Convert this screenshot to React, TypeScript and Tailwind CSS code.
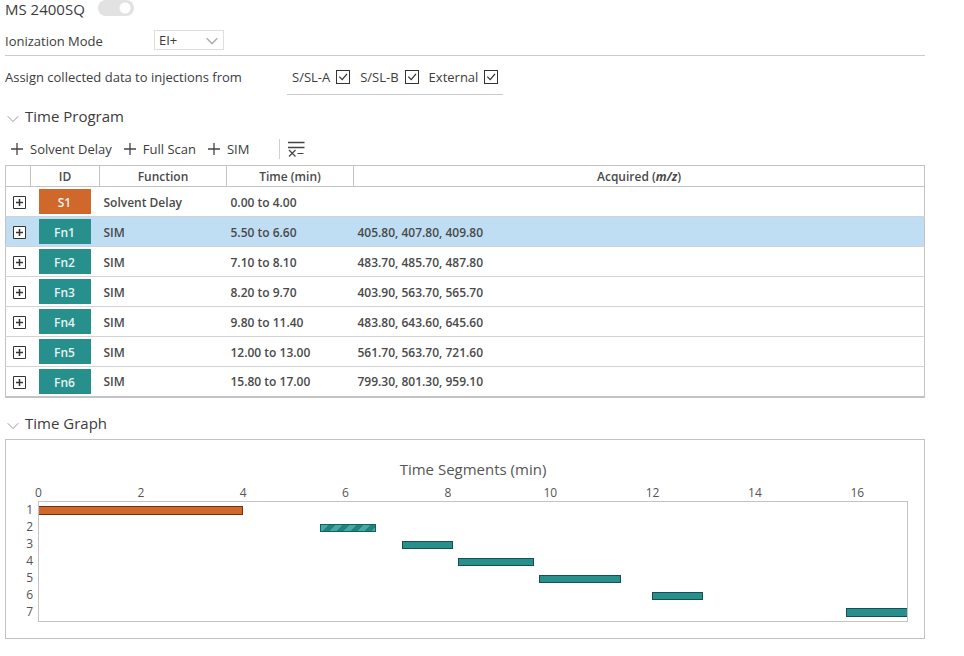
import { useState } from "react";
import type { ReactNode } from "react";

type Row = { id: string; fn: string; start: number; end: number; mz: string };

const rows: Row[] = [
  { id: "S1", fn: "Solvent Delay", start: 0, end: 4, mz: "" },
  { id: "Fn1", fn: "SIM", start: 5.5, end: 6.6, mz: "405.80, 407.80, 409.80" },
  { id: "Fn2", fn: "SIM", start: 7.1, end: 8.1, mz: "483.70, 485.70, 487.80" },
  { id: "Fn3", fn: "SIM", start: 8.2, end: 9.7, mz: "403.90, 563.70, 565.70" },
  { id: "Fn4", fn: "SIM", start: 9.8, end: 11.4, mz: "483.80, 643.60, 645.60" },
  { id: "Fn5", fn: "SIM", start: 12, end: 13, mz: "561.70, 563.70, 721.60" },
  { id: "Fn6", fn: "SIM", start: 15.8, end: 17, mz: "799.30, 801.30, 959.10" },
];

const TOTAL = 17;
const ticks = [0, 2, 4, 6, 8, 10, 12, 14, 16];
const pct = (minutes: number) => `${(minutes / TOTAL) * 100}%`;

function Chevron({ className }: { className: string }) {
  return (
    <svg viewBox="0 0 12 8" fill="none" stroke="currentColor" className={className} aria-hidden="true">
      <path d="M0.7 1.2 6 6.6l5.300-5.400" />
    </svg>
  );
}

function CheckField({ label }: { label: string }) {
  return (
    <label className="flex items-center gap-[6px]">
      {label}
      <span className="grid">
        <input
          type="checkbox"
          defaultChecked
          className="peer col-start-1 row-start-1 size-[14px] appearance-none border border-[#333] bg-white"
        />
        <svg
          viewBox="0 0 14 14"
          fill="none"
          stroke="#333"
          strokeWidth="1.3"
          className="pointer-events-none invisible col-start-1 row-start-1 size-[14px] peer-checked:visible"
          aria-hidden="true"
        >
          <path d="M3.300 6.600 6.200 9.600 11 3.800" />
        </svg>
      </span>
    </label>
  );
}

function AddButton({ children }: { children: ReactNode }) {
  return (
    <button type="button" className="flex items-center gap-[7px]">
      <svg viewBox="0 0 12 12" stroke="#444" strokeWidth="1.3" className="size-3" aria-hidden="true">
        <path d="M6 0v12M0 6h12" />
      </svg>
      {children}
    </button>
  );
}

function Section({ title, children }: { title: string; children: ReactNode }) {
  const [open, setOpen] = useState(true);
  return (
    <section>
      <h2>
        <button
          type="button"
          aria-expanded={open}
          onClick={() => setOpen(!open)}
          className="flex items-center gap-[6px] pl-[2px] text-[15px] leading-6"
        >
          <Chevron className="mt-[6px] h-2 w-3 text-[#999]" />
          {title}
        </button>
      </h2>
      {open && children}
    </section>
  );
}

function ProgramTable() {
  const [selected, setSelected] = useState("Fn1");
  return (
    <table className="w-full table-fixed border-collapse border border-b-2 border-[#c3c3c6] text-[12px] font-semibold text-[#4a4a4a]">
      <colgroup>
        <col className="w-[25px]" />
        <col className="w-[69px]" />
        <col className="w-[127px]" />
        <col className="w-[127px]" />
        <col />
      </colgroup>
      <thead>
        <tr className="h-[21px] border-b border-[#c3c3c6] leading-4 *:pt-[2px]">
          <th className="border-r border-[#c3c3c6]" />
          <th className="border-r border-[#c3c3c6] font-semibold">ID</th>
          <th className="border-r border-[#c3c3c6] font-semibold">Function</th>
          <th className="border-r border-[#c3c3c6] font-semibold">Time (min)</th>
          <th className="font-semibold">
            Acquired (<i className="font-bold">m/z</i>)
          </th>
        </tr>
      </thead>
      <tbody>
        {rows.map((r) => (
          <tr
            key={r.id}
            onClick={() => setSelected(r.id)}
            className={`h-[30px] border-b border-[#d3d3d6] last:border-b-2 last:border-[#c3c3c6] ${
              r.id === selected ? "bg-[#bfdef3]" : ""
            }`}
          >
            <td className="pt-[2px]">
              <button type="button" aria-label={`Expand ${r.id}`} className="ml-[7px] block">
                <svg viewBox="0 0 13 13" fill="none" stroke="#333" className="size-[13px]" aria-hidden="true">
                  <path d="M.5.5h12v12H.5z" fill="#fff" />
                  <path d="M6.500 3v7M3 6.500h7" strokeWidth="1.5" />
                </svg>
              </button>
            </td>
            <td>
              <span
                className={`mr-[9px] ml-2 block h-[25px] text-center leading-[27px] text-[#e4f3f2] ${
                  r.id === "S1" ? "bg-[#d0672b]" : "bg-[#278f8c]"
                }`}
              >
                {r.id}
              </span>
            </td>
            <td className="pt-[2px] pl-1">{r.fn}</td>
            <td className="pt-[2px] pl-1">{`${r.start.toFixed(2)} to ${r.end.toFixed(2)}`}</td>
            <td className="pt-[2px] pl-1">{r.mz}</td>
          </tr>
        ))}
      </tbody>
    </table>
  );
}

function barStyle(id: string) {
  if (id === "S1") return "h-[9px] border-y border-r border-[#6b3412] bg-[#d0672b]";
  if (id === "Fn1")
    return "h-2 border border-[#17605e] bg-[repeating-linear-gradient(135deg,#41aaa6_0px,#41aaa6_5px,#1f8480_5px,#1f8480_10px)]";
  if (id === "Fn6") return "h-[9px] border-y border-l border-[#174f4e] bg-[#278f8c]";
  return "h-2 border border-[#174f4e] bg-[#278f8c]";
}

function TimeGraph() {
  return (
    <div className="border border-[#c3c3c6] pt-[17px] pr-4 pb-4 text-[#555]">
      <h3 className="pl-8 text-center text-[15px] leading-6">Time Segments (min)</h3>
      <div className="flex text-[12px]">
        <ol className="w-8 shrink-0 pt-5 pr-[5px] text-right leading-[17px]">
          {rows.map((r, i) => (
            <li key={r.id}>{i + 1}</li>
          ))}
        </ol>
        <div className="min-w-0 flex-1">
          <div className="grid grid-cols-9" style={{ marginLeft: `-${pct(1)}` }}>
            {ticks.map((t) => (
              <span key={t} className="pt-1 pl-px text-center leading-4">
                {t}
              </span>
            ))}
          </div>
          <div className="border border-[#c3c3c6]">
            {rows.map((r) => (
              <div key={r.id} className="flex h-[17px] items-end pb-1">
                <div className={barStyle(r.id)} style={{ marginLeft: pct(r.start), width: pct(r.end - r.start) }} />
              </div>
            ))}
          </div>
        </div>
      </div>
    </div>
  );
}

export default function App() {
  return (
    <main className="mr-[39px] ml-[5px] font-['Open_Sans','Noto_Sans',sans-serif] text-[13px] leading-[18px] text-[#3c3c3c]">
      <header className="flex h-5 items-start gap-[13px]">
        <h1 className="text-[15px] leading-[18px]">MS 2400SQ</h1>
        <label className="block">
          <input
            type="checkbox"
            role="switch"
            defaultChecked
            aria-label="MS 2400SQ"
            className="block h-4 w-9 appearance-none rounded-full bg-[#e2e2e2] bg-[radial-gradient(circle_at_27px_8px,#fff_5px,transparent_6px)]"
          />
        </label>
      </header>

      <div className="flex items-start border-b border-[#c8ccd0] pt-[10px] pb-[5px]">
        <label htmlFor="ionization" className="w-[149px] pt-[2px]">
          Ionization Mode
        </label>
        <div className="relative">
          <select
            id="ionization"
            className="block h-5 w-[70px] appearance-none border border-[#dcdfe2] bg-white pl-1 text-[13px] leading-[18px]"
          >
            <option>EI+</option>
            <option>EI-</option>
          </select>
          <Chevron className="pointer-events-none absolute top-[7px] right-[6px] h-2 w-3 stroke-[1.5] text-[#b0b0b0]" />
        </div>
      </div>

      <div role="group" aria-labelledby="assign-label" className="flex h-12 items-start pt-[9px]">
        <span id="assign-label" className="w-[282px] pt-[3px]">
          Assign collected data to injections from
        </span>
        <div className="flex h-[30px] gap-[10px] border-b border-[#c8ccd0] px-[5px] pb-[6px]">
          <CheckField label="S/SL-A" />
          <CheckField label="S/SL-B" />
          <CheckField label="External" />
        </div>
      </div>

      <Section title="Time Program">
        <div className="flex h-[37px] items-center pt-[5px] pl-[6px]">
          <div className="flex gap-3">
            <AddButton>Solvent Delay</AddButton>
            <AddButton>Full Scan</AddButton>
            <AddButton>SIM</AddButton>
          </div>
          <button type="button" aria-label="Remove row" className="ml-[30px] border-l border-[#d0d0d3] pl-2">
            <svg viewBox="0 0 17 20" fill="none" stroke="#444" strokeWidth="1.4" className="h-5 w-[17px]" aria-hidden="true">
              <path d="M0 3.500h16.500M0 8.500h16.500" />
              <path d="M1 11l6.500 6.500M7.500 11 1 17.500M9.500 14.500h6" strokeWidth="1.2" />
            </svg>
          </button>
        </div>
        <ProgramTable />
      </Section>

      <div className="pt-[13px]">
        <Section title="Time Graph">
          <div className="pt-1">
            <TimeGraph />
          </div>
        </Section>
      </div>
    </main>
  );
}
